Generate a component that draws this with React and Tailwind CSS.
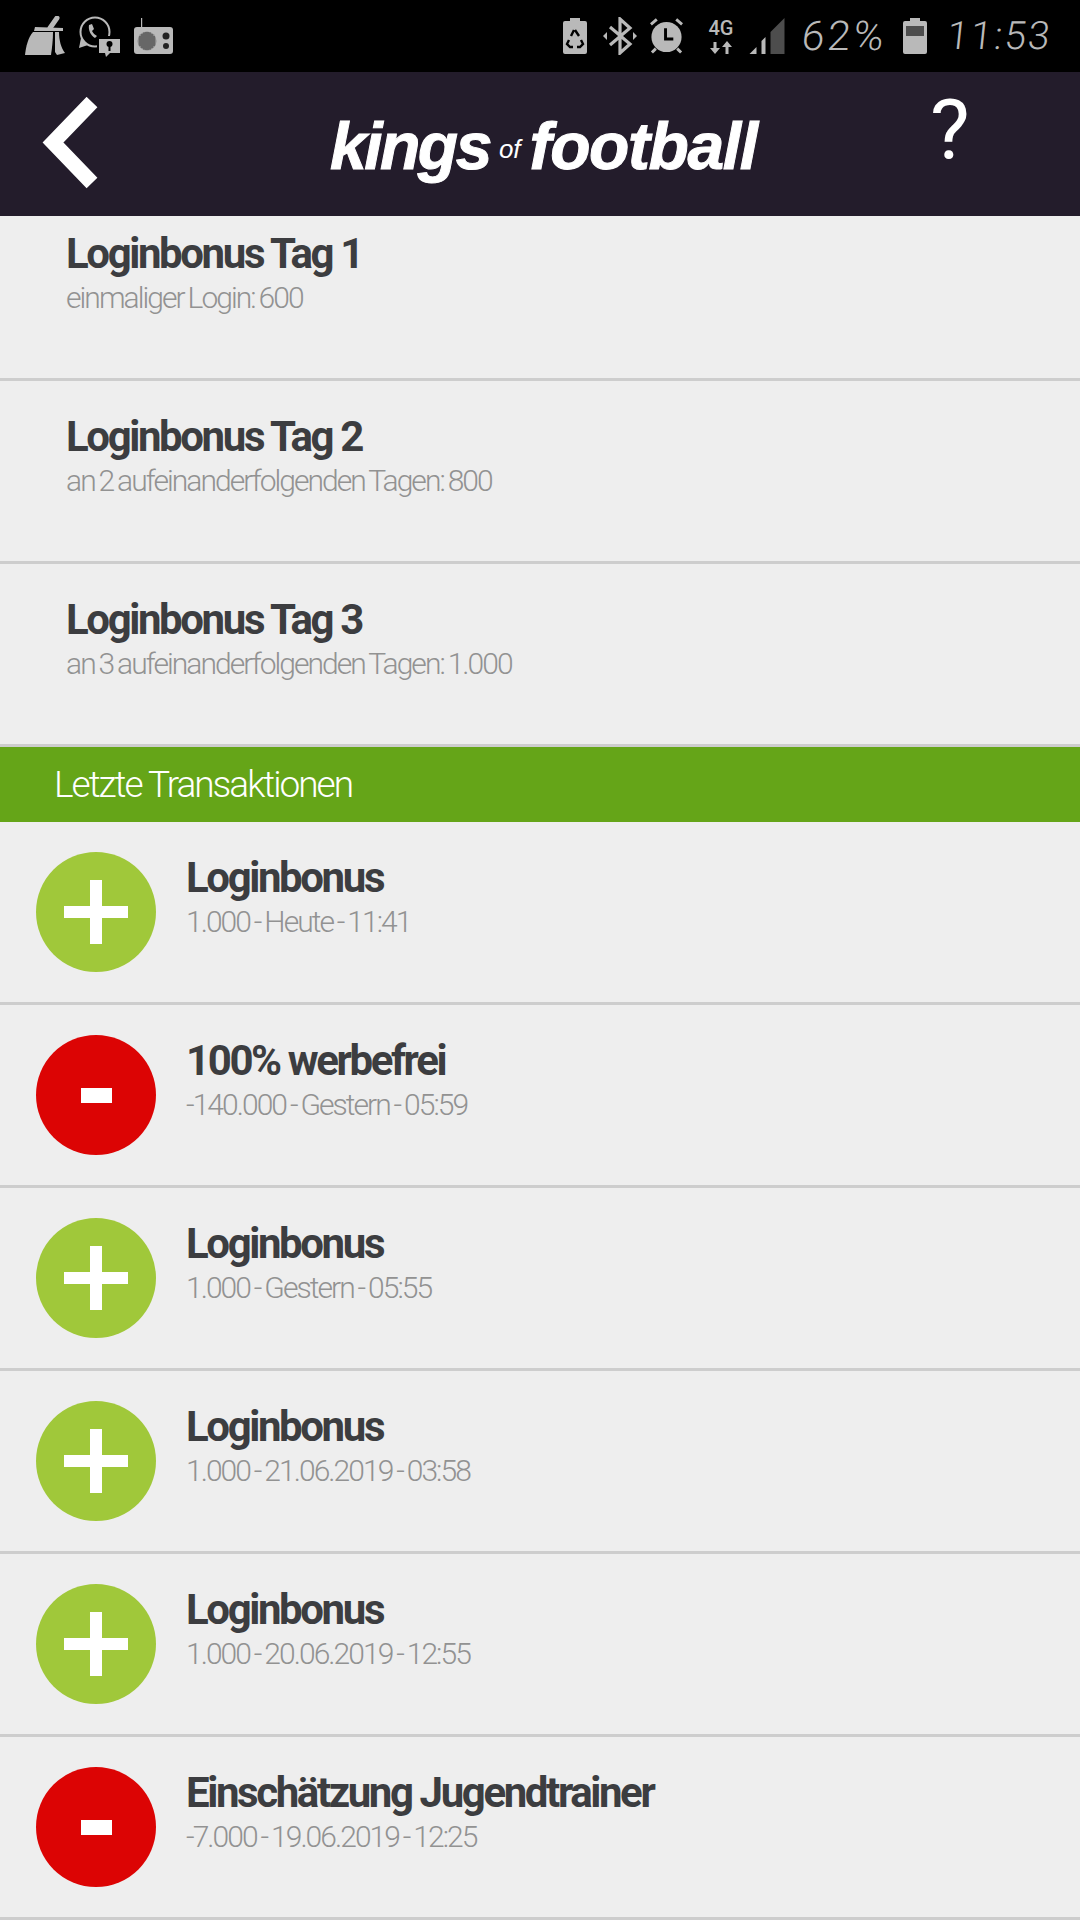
import React from "react";

const loginBoni = [
  { titel: "Loginbonus Tag 1", text: "einmaliger Login: 600" },
  { titel: "Loginbonus Tag 2", text: "an 2 aufeinanderfolgenden Tagen: 800" },
  { titel: "Loginbonus Tag 3", text: "an 3 aufeinanderfolgenden Tagen: 1.000" },
];

const transaktionen = [
  { plus: true, titel: "Loginbonus", text: "1.000 - Heute - 11:41" },
  { plus: false, titel: "100% werbefrei", text: "-140.000 - Gestern - 05:59" },
  { plus: true, titel: "Loginbonus", text: "1.000 - Gestern - 05:55" },
  { plus: true, titel: "Loginbonus", text: "1.000 - 21.06.2019 - 03:58" },
  { plus: true, titel: "Loginbonus", text: "1.000 - 20.06.2019 - 12:55" },
  { plus: false, titel: "Einschätzung Jugendtrainer", text: "-7.000 - 19.06.2019 - 12:25" },
];

function Broom() {
  return (
    <svg width="40" height="40" viewBox="0 0 40 40" fill="#b9b9b9" className="shrink-0">
      <path d="M32 2 L25 12" stroke="#b9b9b9" strokeWidth="5" strokeLinecap="round" />
      <path d="M10 11 L38 12 L38 15 L9 15 Z" />
      <path d="M8 16 L28 16 C28 24 27 32 26 39 L0 39 C1 30 3 22 8 16 Z" />
      <path d="M30 16 L34 16 C34 24 36 32 40 37 L32 39 L30 36 Z" />
    </svg>
  );
}

function WhatsappLock() {
  return (
    <svg width="41" height="41" viewBox="0 0 41 41" className="shrink-0">
      <circle cx="16" cy="16" r="14.5" fill="none" stroke="#b9b9b9" strokeWidth="2" />
      <path d="M0 32 L2 22 L9 29 Z" fill="#b9b9b9" />
      <path d="M10 9 L13 8 L15 13 L13 15 C14 17 16 19 18 20 L16 22 C12 20 9 14 10 9 Z" fill="#b9b9b9" />
      <rect x="18" y="20" width="23" height="21" fill="#000" />
      <path d="M20 23 H41 V37 H31 L27 41 L26 37 H20 Z" fill="#b9b9b9" />
      <circle cx="30.5" cy="28" r="3" fill="#000" />
      <rect x="29.5" y="29" width="2" height="6" fill="#000" />
    </svg>
  );
}

function Radio() {
  return (
    <svg width="39" height="36" viewBox="0 0 39 36" className="shrink-0">
      <rect x="7" y="0" width="1.2" height="10" fill="#b9b9b9" />
      <rect x="0" y="9" width="39" height="27" rx="3" fill="#b9b9b9" />
      <circle cx="13" cy="23" r="9.5" fill="#8a8a8a" />
      <path d="M6 18 V28 M8 16 V30 M10 14.500 V31.500 M12 14 V32 M14 14 V32 M16 14.500 V31.500 M18 16 V30 M20 18 V28" stroke="#444" strokeWidth="1" />
      <circle cx="32" cy="18" r="3.500" fill="#222" />
      <circle cx="32" cy="28" r="3" fill="#222" />
    </svg>
  );
}

function BatterieRecycle() {
  return (
    <svg width="24" height="36" viewBox="0 0 24 36" className="shrink-0">
      <path d="M7 0 H17 V3 H22 Q24 3 24 5 V34 Q24 36 22 36 H2 Q0 36 0 34 V5 Q0 3 2 3 H7 Z" fill="#b9b9b9" />
      <path d="M12 12 L16 18 M8 18 L11 12 M6 22 L4 26 L7 29 H10 M18 22 L20 26 L17 29 H14" fill="none" stroke="#000" strokeWidth="2.400" />
    </svg>
  );
}

function Bluetooth() {
  return (
    <svg width="34" height="38" viewBox="0 0 34 38" className="shrink-0">
      <path d="M7 10 L27 27 L17 36 V2 L27 11 L7 28" fill="none" stroke="#b9b9b9" strokeWidth="3.200" />
      <path d="M0 19 L4 15 V23 Z M34 19 L30 15 V23 Z" fill="#b9b9b9" />
    </svg>
  );
}

function Wecker() {
  return (
    <svg width="35" height="36" viewBox="0 0 36 36" className="shrink-0">
      <circle cx="18" cy="19" r="15.500" fill="#b9b9b9" />
      <path d="M2 6 L8 1 M34 6 L28 1 M7 31 L3 35 M29 31 L33 35" stroke="#b9b9b9" strokeWidth="3" />
      <path d="M17 10 V21 H25" fill="none" stroke="#000" strokeWidth="3" />
    </svg>
  );
}

function Netz() {
  return (
    <div className="flex w-[28px] shrink-0 flex-col items-center">
      <span className="font-['Roboto',sans-serif] text-[20px] font-medium leading-[20px] text-[#b9b9b9]">4G</span>
      <svg width="22" height="13" viewBox="0 0 22 13" className="mt-[3px]">
        <path d="M5 13 L0 7 H3.500 V1 H6.500 V7 H10 Z M17 0 L22 6 H18.500 V13 H15.500 V6 H12 Z" fill="#b9b9b9" />
      </svg>
    </div>
  );
}

function Signal() {
  return (
    <svg width="36" height="36" viewBox="0 0 35 36" className="shrink-0">
      <path d="M0 36 L7 29 V36 Z" fill="#b9b9b9" />
      <path d="M12 36 V23 L16 19 V36 Z" fill="#b9b9b9" />
      <path d="M21 36 V14 L35 0 V36 Z" fill="#4d4d4d" />
    </svg>
  );
}

function Batterie() {
  return (
    <svg width="24" height="36" viewBox="0 0 24 36" className="shrink-0">
      <path d="M7 0 H17 V3 H22 Q24 3 24 5 V34 Q24 36 22 36 H2 Q0 36 0 34 V5 Q0 3 2 3 H7 Z" fill="#b9b9b9" />
      <rect x="3" y="8" width="18" height="10" fill="#4d4d4d" />
    </svg>
  );
}

function StatusBar() {
  return (
    <div className="flex h-[72px] items-center justify-between bg-black pl-[25px] pr-[34px]">
      <div className="flex items-center gap-[14px]">
        <Broom />
        <WhatsappLock />
        <Radio />
      </div>
      <div className="flex items-center">
        <BatterieRecycle />
        <div className="w-[16px]" />
        <Bluetooth />
        <div className="w-[12px]" />
        <Wecker />
        <div className="w-[23px]" />
        <Netz />
        <div className="w-[14px]" />
        <Signal />
        <span className="ml-[17px] w-[88px] -skew-x-6 whitespace-nowrap font-['Roboto',sans-serif] text-[41px] font-light leading-none tracking-[3px] text-[#b9b9b9]">62%</span>
        <div className="w-[13px]" />
        <Batterie />
        <span className="ml-[20px] w-[99px] -skew-x-6 whitespace-nowrap font-['Roboto',sans-serif] text-[39px] font-light leading-none tracking-[2px] text-[#b9b9b9]">11:53</span>
      </div>
    </div>
  );
}

function Header() {
  return (
    <div className="flex h-[144px] items-center bg-[#231c2b] pl-[42px]">
      <svg width="56" height="92" viewBox="0 0 56 92" className="-mt-[3px] shrink-0">
        <path d="M50 5 L11 45.500 L50 86" fill="none" stroke="#fff" strokeWidth="15" />
      </svg>
      <div className="ml-[232px] mt-[3px] w-[430px] whitespace-nowrap font-['Liberation_Sans',sans-serif] font-bold italic leading-none text-white [-webkit-text-stroke:1px_white]">
        <span className="text-[66px] tracking-[-2.5px]">kings</span>
        <span className="mx-[9px] align-[11px] text-[26px] font-normal [-webkit-text-stroke:0]">of</span>
        <span className="text-[66px] tracking-[-1.4px]">football</span>
      </div>
      <span className="ml-[170px] -mt-[26px] font-['Roboto',sans-serif] text-[84px] font-normal leading-none text-white">?</span>
    </div>
  );
}

function Zeile({ titel, text, erste, children, links }) {
  return (
    <div className={`flex border-b-[3px] border-[#cdcdcd] ${erste ? "h-[165px]" : "h-[183px]"}`}>
      {children}
      <div className={`${links} ${erste ? "pt-[13px]" : "pt-[31px]"}`}>
        <div className="font-['Roboto',sans-serif] text-[42px] font-bold leading-[49px] tracking-[-2.4px] text-[#3c3d40]">{titel}</div>
        <div className="font-['Roboto',sans-serif] text-[30px] font-light leading-[39px] tracking-[-1.95px] [word-spacing:-1.5px] text-[#929292]">{text}</div>
      </div>
    </div>
  );
}

function Kreis({ plus }) {
  return (
    <div className={`ml-[36px] mt-[30px] flex h-[120px] w-[120px] shrink-0 items-center justify-center rounded-full ${plus ? "bg-[#a0c83a]" : "bg-[#dc0404]"}`}>
      {plus ? (
        <svg width="64" height="64" viewBox="0 0 64 64">
          <path d="M26 0 H38 V26 H64 V38 H38 V64 H26 V38 H0 V26 H26 Z" fill="#fff" />
        </svg>
      ) : (
        <div className="h-[15px] w-[31px] bg-white" />
      )}
    </div>
  );
}

export default function App() {
  return (
    <div className="h-[1920px] w-[1080px] overflow-hidden bg-[#eeeeee]">
      <StatusBar />
      <Header />
      {loginBoni.map((b, i) => (
        <Zeile key={b.titel} titel={b.titel} text={b.text} erste={i === 0} links="pl-[66px]" />
      ))}
      <div className="flex h-[75px] items-center bg-[#65a518] pl-[54px] font-['Roboto',sans-serif] text-[37px] font-light tracking-[-2px] text-white">
        Letzte Transaktionen
      </div>
      {transaktionen.map((t, i) => (
        <Zeile key={i} titel={t.titel} text={t.text} links="pl-[30px]">
          <Kreis plus={t.plus} />
        </Zeile>
      ))}
    </div>
  );
}
